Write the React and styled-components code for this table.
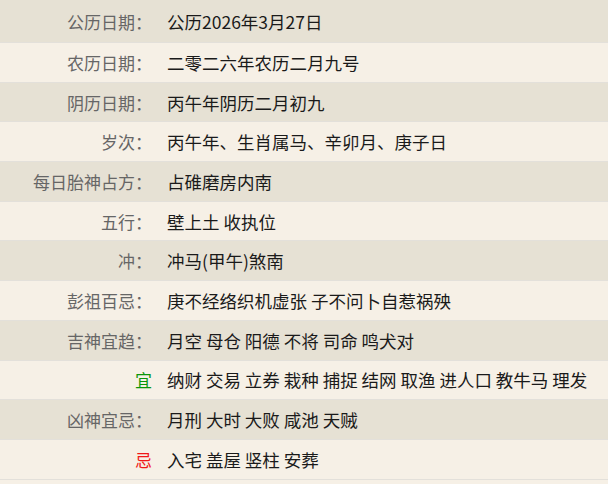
import React from 'react';
import styled, { createGlobalStyle } from 'styled-components';

const GlobalStyle = createGlobalStyle`
  html, body {
    margin: 0;
    padding: 0;
    background: #f6f0e6;
  }
  body {
    font-family: "Noto Sans CJK SC", "Noto Sans", sans-serif;
  }
`;

const Table = styled.div`
  display: flex;
  flex-direction: column;
  width: 608px;
`;

const Row = styled.div`
  display: grid;
  grid-template-columns: 152px 1fr;
  column-gap: 15px;
  align-items: center;
  height: 38.7px;
  border-bottom: 1px solid #e3e0da;
  background: ${p => (p.$alt ? '#f6f0e6' : '#e6e1d4')};

  &:first-child {
    height: 42px;
    padding-top: 0;
  }
`;

const Label = styled.div`
  text-align: right;
  font-size: 17px;
  line-height: 24px;
  color: ${p => p.$color || '#666'};
  padding-top: 1px;
`;

const Value = styled.div`
  font-size: 17.5px;
  line-height: 24px;
  color: #1a1a1a;
  white-space: nowrap;
  padding-top: 1px;
`;

const rows = [
  ['公历日期：', '公历2026年3月27日'],
  ['农历日期：', '二零二六年农历二月九号'],
  ['阴历日期：', '丙午年阴历二月初九'],
  ['岁次：', '丙午年、生肖属马、辛卯月、庚子日'],
  ['每日胎神占方：', '占碓磨房内南'],
  ['五行：', '壁上土 收执位'],
  ['冲：', '冲马(甲午)煞南'],
  ['彭祖百忌：', '庚不经络织机虚张 子不问卜自惹祸殃'],
  ['吉神宜趋：', '月空 母仓 阳德 不将 司命 鸣犬对'],
  ['宜', '纳财 交易 立券 栽种 捕捉 结网 取渔 进人口 教牛马 理发', '#0a960a'],
  ['凶神宜忌：', '月刑 大时 大败 咸池 天贼'],
  ['忌', '入宅 盖屋 竖柱 安葬', '#f01818'],
];

export default function App() {
  return (
    <>
      <GlobalStyle />
      <Table>
        {rows.map(([label, value, color], i) => (
          <Row key={label} $alt={i % 2 === 1}>
            <Label $color={color}>{label}</Label>
            <Value>{value}</Value>
          </Row>
        ))}
      </Table>
    </>
  );
}
